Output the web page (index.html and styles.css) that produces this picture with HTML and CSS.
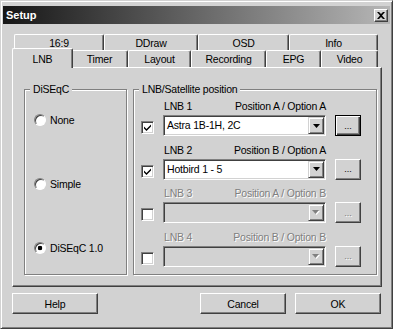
FILE: index.html
```html
<!DOCTYPE html>
<html>
<head>
<meta charset="utf-8">
<link rel="stylesheet" href="styles.css">
</head>
<body>
<div class="window">
  <div class="titlebar">
    <span class="title">Setup</span>
    <span class="close"><svg width="8" height="7" viewBox="0 0 8 7"><path d="M0 0h2l2 2 2-2h2L5 3.5 8 7H6L4 5 2 7H0l3-3.5z" fill="#000"/></svg></span>
  </div>
  <div class="client">
    <div class="tabs">
      <div class="tabrow row-back">
        <div class="tab">16:9</div>
        <div class="tab">DDraw</div>
        <div class="tab">OSD</div>
        <div class="tab">Info</div>
      </div>
      <div class="tabrow row-front">
        <div class="tab active">LNB</div>
        <div class="tab">Timer</div>
        <div class="tab">Layout</div>
        <div class="tab">Recording</div>
        <div class="tab">EPG</div>
        <div class="tab">Video</div>
      </div>
    </div>
    <div class="panel">
      <div class="group diseqc">
        <div class="group-title">DiSEqC</div>
        <div class="radios">
          <div class="radio"><span class="radio-box"></span><span>None</span></div>
          <div class="radio"><span class="radio-box"></span><span>Simple</span></div>
          <div class="radio"><span class="radio-box on"></span><span>DiSEqC 1.0</span></div>
        </div>
      </div>
      <div class="group lnbs">
        <div class="group-title">LNB/Satellite position</div>
        <div class="lnb-list">
          <div class="lnb">
            <div class="lnb-head"><span>LNB 1</span><span>Position A / Option A</span></div>
            <span class="check"><svg width="7" height="7" viewBox="0 0 7 7"><path d="M0 2.5L2.5 5 7 0.5V2.5L2.5 7 0 4.5Z" fill="#000"/></svg></span>
            <div class="combo"><span class="combo-text">Astra 1B-1H, 2C</span><span class="combo-btn"><svg width="7" height="4" viewBox="0 0 7 4"><path d="M0 0h7L3.5 4z" fill="#000"/></svg></span></div>
            <div class="btn small default">...</div>
          </div>
          <div class="lnb">
            <div class="lnb-head"><span>LNB 2</span><span>Position B / Option A</span></div>
            <span class="check"><svg width="7" height="7" viewBox="0 0 7 7"><path d="M0 2.5L2.5 5 7 0.5V2.5L2.5 7 0 4.5Z" fill="#000"/></svg></span>
            <div class="combo"><span class="combo-text">Hotbird 1 - 5</span><span class="combo-btn"><svg width="7" height="4" viewBox="0 0 7 4"><path d="M0 0h7L3.5 4z" fill="#000"/></svg></span></div>
            <div class="btn small">...</div>
          </div>
          <div class="lnb disabled">
            <div class="lnb-head"><span>LNB 3</span><span>Position A / Option B</span></div>
            <span class="check"></span>
            <div class="combo"><span class="combo-text"></span><span class="combo-btn"><svg width="8" height="5" viewBox="0 0 8 5"><path d="M1 1h7L4.5 5z" fill="#fff"/><path d="M0 0h7L3.5 4z" fill="#808080"/></svg></span></div>
            <div class="btn small">...</div>
          </div>
          <div class="lnb disabled">
            <div class="lnb-head"><span>LNB 4</span><span>Position B / Option B</span></div>
            <span class="check"></span>
            <div class="combo"><span class="combo-text"></span><span class="combo-btn"><svg width="8" height="5" viewBox="0 0 8 5"><path d="M1 1h7L4.5 5z" fill="#fff"/><path d="M0 0h7L3.5 4z" fill="#808080"/></svg></span></div>
            <div class="btn small">...</div>
          </div>
        </div>
      </div>
    </div>
    <div class="buttons">
      <div class="btn wide help">Help</div>
      <div class="btn wide">Cancel</div>
      <div class="btn wide">OK</div>
    </div>
  </div>
</div>
</body>
</html>
```

FILE: styles.css
```css
body {
  margin: 0;
  background: #d2d2d2;
  font-family: "Liberation Sans", Arial, sans-serif;
  font-size: 10.5px;
  letter-spacing: -0.2px;
  color: #000;
}

.window {
  width: 393px;
  height: 329px;
  box-sizing: border-box;
  border: 1px solid;
  border-color: #d2d2d2 #404040 #404040 #d2d2d2;
  box-shadow: inset 1px 1px #fff, inset -1px -1px #808080;
  padding: 5px 2px 2px;
  background: #d2d2d2;
}

.titlebar {
  height: 18px;
  display: flex;
  align-items: center;
  justify-content: space-between;
  background: linear-gradient(90deg, #161616, #b6b6b6);
  padding: 0 2px 0 3px;
}

.title {
  color: #fff;
  font-weight: bold;
  font-size: 11px;
  letter-spacing: 0;
}

.close {
  width: 14px;
  height: 13px;
  box-sizing: border-box;
  border: 1px solid;
  border-color: #fff #404040 #404040 #fff;
  box-shadow: inset -1px -1px #808080;
  background: #d2d2d2;
  display: flex;
  align-items: center;
  justify-content: center;
}

.client {
  padding: 0 8px 0 9px;
}

.tabs {
  margin-top: 10px;
  padding: 0 4px 0 2px;
}

.tabrow {
  display: grid;
}

.row-back {
  grid-template-columns: 90px 94px 91px 89px;
  grid-template-rows: 16px;
}

.row-front {
  grid-template-columns: 57px 57px 63px 75px 55px 57px;
  grid-template-rows: 17px;
}

.tab {
  display: flex;
  align-items: center;
  justify-content: center;
  border-top: 1px solid #fff;
  border-left: 1px solid #fff;
  border-right: 1px solid #404040;
  box-shadow: inset -1px 0 #808080;
  border-radius: 2px 2px 0 0;
  background: #d2d2d2;
}

.tab.active {
  margin: -2px -2px -1px;
  z-index: 1;
}

.panel {
  height: 220px;
  box-sizing: border-box;
  border: 1px solid;
  border-color: #fff #404040 #404040 #fff;
  box-shadow: inset -1px -1px #808080;
  padding: 21px 4px 11px 11px;
  display: flex;
  gap: 6px;
}

.group {
  box-sizing: border-box;
  height: 186px;
  border: 1px solid #808080;
  box-shadow: inset 1px 1px #fff, 1px 1px #fff;
}

.diseqc { width: 103px; }
.lnbs { width: 244px; }

.group-title {
  margin: -7px 0 0 5px;
  padding: 0 3px;
  line-height: 13px;
  width: fit-content;
  background: #d2d2d2;
}

.radios {
  display: flex;
  flex-direction: column;
  gap: 51px;
  padding: 17px 0 0 9px;
}

.radio {
  display: flex;
  align-items: center;
  gap: 4px;
  height: 13px;
}

.radio-box {
  width: 12px;
  height: 12px;
  box-sizing: border-box;
  border-radius: 50%;
  border: 1px solid;
  border-color: #808080 #fff #fff #808080;
  box-shadow: inset 1px 1px #404040;
  background: #fff;
}

.radio-box.on {
  background: radial-gradient(circle at 50% 50%, #000 0 2px, #fff 2.6px);
}

.lnb-list {
  display: flex;
  flex-direction: column;
  gap: 7.67px;
  padding: 4px 0 0 7px;
}

.lnb {
  display: grid;
  grid-template-columns: 13px 163px 26px;
  grid-template-rows: 13px 21px;
  column-gap: 9px;
  row-gap: 2px;
}

.lnb-head {
  grid-column: 2;
  grid-row: 1;
  display: flex;
  justify-content: space-between;
  line-height: 13px;
  padding-left: 1px;
}

.check {
  grid-column: 1;
  grid-row: 2;
  align-self: end;
  margin-bottom: 2px;
  width: 13px;
  height: 13px;
  box-sizing: border-box;
  border: 1px solid;
  border-color: #808080 #fff #fff #808080;
  box-shadow: inset 1px 1px #404040, inset -1px -1px #d2d2d2;
  background: #fff;
  display: flex;
  align-items: center;
  justify-content: center;
}

.combo {
  grid-column: 2;
  grid-row: 2;
  box-sizing: border-box;
  border: 1px solid;
  border-color: #808080 #fff #fff #808080;
  box-shadow: inset 1px 1px #404040, inset -1px -1px #d2d2d2;
  padding: 1px;
  background: #fff;
  display: flex;
}

.combo-text {
  flex: 1;
  padding-left: 2px;
  line-height: 17px;
}

.combo-btn {
  width: 16px;
  height: 17px;
  box-sizing: border-box;
  border: 1px solid;
  border-color: #d2d2d2 #404040 #404040 #d2d2d2;
  box-shadow: inset 1px 1px #fff, inset -1px -1px #808080;
  background: #d2d2d2;
  display: flex;
  align-items: center;
  justify-content: center;
}

.btn {
  height: 21px;
  box-sizing: border-box;
  border: 1px solid;
  border-color: #fff #404040 #404040 #fff;
  box-shadow: inset -1px -1px #808080;
  background: #d2d2d2;
  display: flex;
  align-items: center;
  justify-content: center;
}

.btn.small {
  grid-column: 3;
  grid-row: 2;
  font-size: 9px;
  letter-spacing: 0;
}

.btn.default {
  border-color: #000;
  box-shadow: inset 1px 1px #fff, inset -1px -1px #404040, inset -2px -2px #808080;
}

.disabled .lnb-head,
.disabled .btn {
  color: #808080;
  text-shadow: 1px 1px #fff;
}

.disabled .combo {
  background: #d2d2d2;
}

.buttons {
  display: flex;
  gap: 9px;
  margin-top: 6px;
  padding-right: 1px;
}

.btn.wide {
  width: 86px;
}

.btn.help {
  margin-right: auto;
}
```
